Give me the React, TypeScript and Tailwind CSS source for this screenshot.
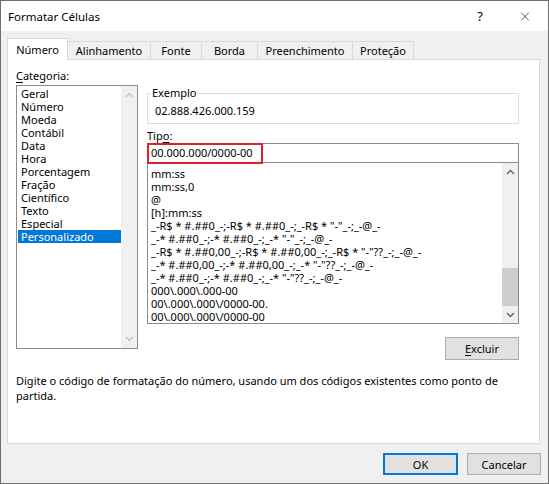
import { X } from "lucide-react";

const categorias = [
  "Geral",
  "Número",
  "Moeda",
  "Contábil",
  "Data",
  "Hora",
  "Porcentagem",
  "Fração",
  "Científico",
  "Texto",
  "Especial",
  "Personalizado",
];

const tipos = [
  "mm:ss",
  "mm:ss,0",
  "@",
  "[h]:mm:ss",
  '_-R$ * #.##0_-;-R$ * #.##0_-;_-R$ * "-"_-;_-@_-',
  '_-* #.##0_-;-* #.##0_-;_-* "-"_-;_-@_-',
  '_-R$ * #.##0,00_-;-R$ * #.##0,00_-;_-R$ * "-"??_-;_-@_-',
  '_-* #.##0,00_-;-* #.##0,00_-;_-* "-"??_-;_-@_-',
  '_-* #.##0_-;-* #.##0_-;_-* "-"??_-;_-@_-',
  "000\\.000\\.000-00",
  "00\\.000\\.000\\/0000-00.",
  "00\\.000\\.000\\/0000-00",
];

const tabs = [
  { label: "Alinhamento", w: "w-[83px]" },
  { label: "Fonte", w: "w-[51px]" },
  { label: "Borda", w: "w-[56px]" },
  { label: "Preenchimento", w: "w-[95px]" },
  { label: "Proteção", w: "w-[61px]" },
];

const Chevron = ({ up, color }: { up?: boolean; color: string }) => (
  <svg width="9" height="6" viewBox="0 0 9 6" className="block">
    <path
      d={up ? "M1 5 L4.5 1.5 L8 5" : "M1 1 L4.5 4.5 L8 1"}
      fill="none"
      stroke={color}
      strokeWidth="1.4"
    />
  </svg>
);

const App = () => {
  return (
    <div
      className="w-[549px] h-[484px] border border-[#6e6e6e] bg-[#f0f0f0] flex flex-col text-[11px] text-black"
      style={{ fontFamily: '"Noto Sans", "Open Sans", sans-serif' }}>
      {/* title bar */}
      <div className="h-[30px] bg-white flex items-center pl-[7px]">
        <span className="text-[11.5px] leading-[15px]">Formatar Células</span>
        <span className="ml-auto text-[13px] leading-[15px] w-[12px] text-center">?</span>
        <span className="ml-[32px] mr-[16px] w-[14px] flex justify-center">
          <X size={15} strokeWidth={1.2} color="#111" />
        </span>
      </div>

      {/* tabs */}
      <div className="mt-[7px] ml-[6px] flex items-end h-[21px]">
        <div className="relative z-10 -mb-px w-[61px] h-[22px] bg-white border-l border-t border-r border-[#d9d9d9] flex items-center justify-center leading-[15px]">
          Número
        </div>
        {tabs.map((t) => (
          <div
            key={t.label}
            className={`${t.w} h-[18px] border-t border-r border-[#d9d9d9] flex items-center justify-center leading-[15px]`}>
            {t.label}
          </div>
        ))}
      </div>

      {/* panel */}
      <div className="ml-[6px] w-[533px] h-[385px] border border-[#d9d9d9] bg-white flex flex-col">
        <div className="flex h-[300px]">
          {/* left column */}
          <div className="ml-[8px] w-[122px] pt-[8px] flex flex-col">
            <div className="h-[15px] leading-[15px]">
              <span className="underline underline-offset-2">C</span>ategoria:
            </div>
            <div className="mt-[2px] h-[264px] border border-[#8c8c8c] flex">
              <div className="flex-1 flex flex-col pt-px">
                {categorias.map((c) => (
                  <div
                    key={c}
                    className={`ml-px h-[13px] leading-[13px] pl-[3px] ${
                      c === "Personalizado" ? "bg-[#0078d7] text-white" : ""
                    }`}>
                    {c}
                  </div>
                ))}
              </div>
              <div className="w-[16px] bg-[#f0f0f0] flex flex-col justify-between items-center py-[6px]">
                <Chevron up color="#c4c4c4" />
                <Chevron color="#c4c4c4" />
              </div>
            </div>
          </div>

          {/* right column */}
          <div className="ml-[9px] w-[372px] flex flex-col">
            <div className="relative mt-[33px] h-[31px] border border-[#dcdcdc]">
              <span className="absolute left-[3px] -top-[9px] px-[1px] bg-white leading-[15px]">Exemplo</span>
              <div className="pl-[7px] pt-[10px] leading-[14px]">02.888.426.000.159</div>
            </div>

            <div className="mt-[4px] h-[15px] leading-[15px]">
              Tip<span className="underline underline-offset-2">o</span>:
            </div>

            <div className="relative h-[20px] border border-[#8c8c8c] flex items-center pl-[3px] leading-[14px]">
              00.000.000/0000-00
              <div className="absolute -left-px -top-px w-[116px] h-[21px] border-2 border-[#e0202a]" />
            </div>

            <div className="h-[161px] border-x border-b border-[#8c8c8c] flex">
              <div className="flex-1 pt-[4px] pl-[3px] flex flex-col overflow-hidden">
                {tipos.map((t, i) => (
                  <div key={i} className="h-[13px] leading-[13px] whitespace-pre">
                    {t}
                  </div>
                ))}
              </div>
              <div className="w-[16px] bg-[#f0f0f0] flex flex-col">
                <div className="h-[17px] flex items-center justify-center">
                  <Chevron up color="#606060" />
                </div>
                <div className="h-[88px]" />
                <div className="h-[38px] bg-[#cdcdcd]" />
                <div className="h-[17px] flex items-center justify-center">
                  <Chevron color="#606060" />
                </div>
              </div>
            </div>

            <button className="self-end mt-[13px] w-[74px] h-[23px] bg-[#e1e1e1] border border-[#adadad] leading-[15px]">
              <span className="underline underline-offset-2">E</span>xcluir
            </button>
          </div>
        </div>

        <p className="ml-[8px] mt-[13px] leading-[15px]">
          Digite o código de formatação do número, usando um dos códigos existentes como ponto de
          <br />
          partida.
        </p>
      </div>

      {/* footer */}
      <div className="mt-[9px] flex justify-end gap-[9px] pr-[7px]">
        <button className="w-[75px] h-[22px] bg-[#e1e1e1] border-2 border-[#0078d7] leading-[15px]">OK</button>
        <button className="w-[74px] h-[22px] bg-[#e1e1e1] border border-[#adadad] leading-[15px]">Cancelar</button>
      </div>
    </div>
  );
};

export default App;
